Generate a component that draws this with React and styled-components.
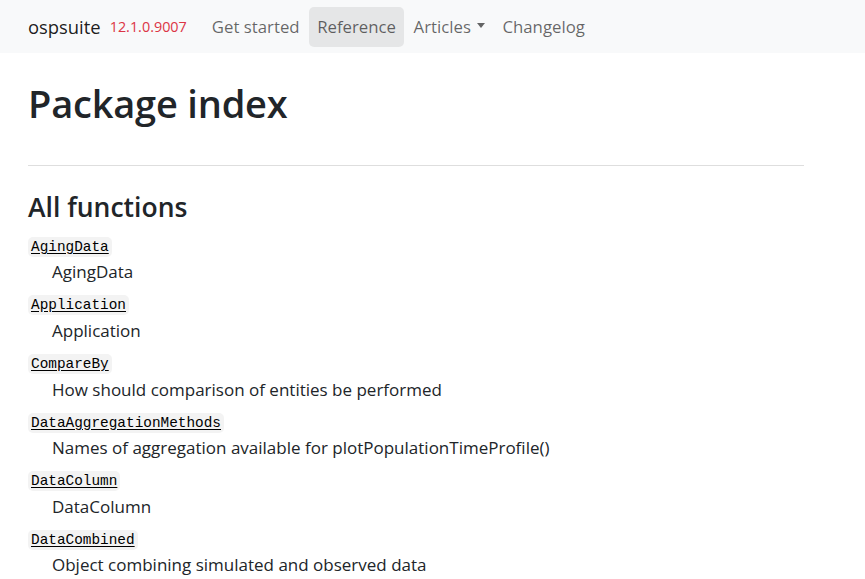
import React from "react";
import styled, { createGlobalStyle } from "styled-components";

const Global = createGlobalStyle`
  html, body { margin: 0; padding: 0; background: #fff; }
  body { font-family: "Open Sans", "Noto Sans", sans-serif; color: #212529; }
`;

const Navbar = styled.nav`
  height: 53px;
  background: #f8f9fa;
  display: flex;
  align-items: center;
  padding: 0 28px;
`;

const Brand = styled.a`
  font-size: 18.4px;
  color: rgba(0, 0, 0, 0.9);
  text-decoration: none;
  margin-right: 9px;
`;

const Version = styled.span`
  font-size: 14.4px;
  color: #dc3545;
  margin-right: 17px;
`;

const NavList = styled.div`
  display: flex;
  align-items: center;
  gap: 1.5px;
`;

const NavLink = styled.a`
  font-size: 16.8px;
  color: rgba(0, 0, 0, 0.6);
  text-decoration: none;
  padding: 0 8px;
  height: 40px;
  display: flex;
  align-items: center;
  border-radius: 5px;
  background: ${(p) => (p.$active ? "#e5e6e7" : "transparent")};
`;

const Caret = styled.span`
  display: inline-block;
  margin-left: 6px;
  width: 0;
  height: 0;
  border-left: 4.5px solid transparent;
  border-right: 4.5px solid transparent;
  border-top: 5px solid rgba(0, 0, 0, 0.6);
  position: relative;
  top: -1px;
`;

const Main = styled.main`
  width: 776px;
  padding: 0 28px;
`;

const H1 = styled.h1`
  font-size: 38px;
  font-weight: 600;
  margin: 28px 0 0;
  line-height: 1.2;
  letter-spacing: -0.2px;
`;

const Rule = styled.hr`
  border: 0;
  border-top: 1px solid #dedede;
  margin: 38px 0 0;
`;

const H2 = styled.h2`
  font-size: 26.5px;
  font-weight: 600;
  margin: 26px 0 0;
  line-height: 1.2;
`;

const List = styled.dl`
  margin: 12px 0 0;
`;

const Term = styled.dt`
  margin: 0;
  height: 23px;
  display: flex;
  align-items: center;
`;

const Code = styled.code`
  font-family: "Liberation Mono", "DejaVu Sans Mono", monospace;
  font-size: 14.4px;
  background: #f3f3f3;
  border-radius: 5px;
  padding: 2px 3px;
  color: #000;
  text-decoration: underline;
  text-underline-offset: 2px;
`;

const Desc = styled.dd`
  margin: 3px 0 10.6px 24px;
  font-size: 17px;
  line-height: 22px;
`;

const items = [
  ["AgingData", "AgingData"],
  ["Application", "Application"],
  ["CompareBy", "How should comparison of entities be performed"],
  ["DataAggregationMethods", "Names of aggregation available for plotPopulationTimeProfile()"],
  ["DataColumn", "DataColumn"],
  ["DataCombined", "Object combining simulated and observed data"],
];

export default function App() {
  return (
    <>
      <Global />
      <Navbar>
        <Brand href="#">ospsuite</Brand>
        <Version>12.1.0.9007</Version>
        <NavList>
          <NavLink href="#">Get started</NavLink>
          <NavLink href="#" $active>Reference</NavLink>
          <NavLink href="#">Articles<Caret /></NavLink>
          <NavLink href="#">Changelog</NavLink>
        </NavList>
      </Navbar>
      <Main>
        <H1>Package index</H1>
        <Rule />
        <H2>All functions</H2>
        <List>
          {items.map(([t, d]) => (
            <React.Fragment key={t}>
              <Term><Code>{t}</Code></Term>
              <Desc>{d}</Desc>
            </React.Fragment>
          ))}
        </List>
      </Main>
    </>
  );
}
